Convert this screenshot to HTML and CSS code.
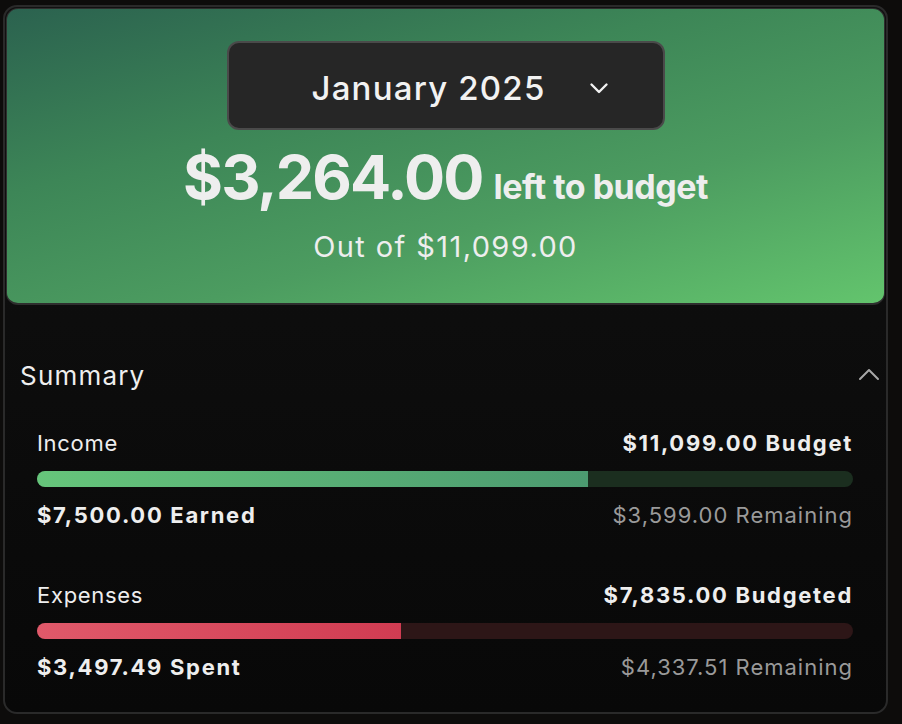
FILE: index.html
```html
<!DOCTYPE html>
<html lang="en">
<head>
    <meta charset="UTF-8">
    <meta name="viewport" content="width=device-width, initial-scale=1.0">
    <title>Budget</title>
    <link rel="stylesheet" href="styles.css">
</head>
<body>
    <div class="card">
        <!-- header with month picker -->
        <div class="hero">
            <button class="month-picker">
                <span>January 2025</span>
                <svg width="24" height="24" viewBox="0 0 24 24" fill="none" stroke="#f2f2f2" stroke-width="2.4" stroke-linecap="round" stroke-linejoin="round"><path d="M4.5 8.5l7.5 7.5 7.5-7.5"/></svg>
            </button>
            <div class="left-amount">
                <span class="big">$3,264.00</span>
                <span class="small">left to budget</span>
            </div>
            <div class="out-of">Out of $11,099.00</div>
        </div>

        <!-- summary -->
        <div class="summary">
            <div class="summary-head">
                <span>Summary</span>
                <svg width="24" height="24" viewBox="0 0 24 24" fill="none" stroke="#a8a8a8" stroke-width="2" stroke-linecap="round" stroke-linejoin="round"><path d="M3 16l9-9 9 9"/></svg>
            </div>

            <div class="group">
                <div class="row">
                    <span class="label">Income</span>
                    <span class="strong">$11,099.00 Budget</span>
                </div>
                <div class="bar income">
                    <div class="fill" style="width: 67.58%;"></div>
                </div>
                <div class="row">
                    <span class="strong">$7,500.00 Earned</span>
                    <span class="muted">$3,599.00 Remaining</span>
                </div>
            </div>

            <div class="group">
                <div class="row">
                    <span class="label">Expenses</span>
                    <span class="strong">$7,835.00 Budgeted</span>
                </div>
                <div class="bar expense">
                    <div class="fill" style="width: 44.64%;"></div>
                </div>
                <div class="row">
                    <span class="strong">$3,497.49 Spent</span>
                    <span class="muted">$4,337.51 Remaining</span>
                </div>
            </div>
        </div>
    </div>
</body>
</html>
```

FILE: styles.css
```css
body {
    margin: 0;
    background-color: #0d0c0b;
    font-family: Inter, "Noto Sans", sans-serif;
    color: #eeeeee;
}

.card {
    margin: 5px 0 0 3px;
    width: 881px;
    height: 705px;
    border: 2px solid #2a2a2a;
    border-radius: 14px;
    background: linear-gradient(180deg, #111111 0%, #080808 100%);
    overflow: hidden;
}

.hero {
    margin: 1px;
    height: 294px;
    border: 1px solid #2e2e2e;
    border-bottom-width: 2px;
    border-radius: 12px;
    background: linear-gradient(165deg, #2b624f 0%, #3d8657 35%, #4c9c60 65%, #63c46d 100%);
    display: flex;
    flex-direction: column;
    align-items: center;
}

.month-picker {
    margin-top: 32px;
    width: 438px;
    height: 89px;
    padding: 4px 52px 0 83px;
    display: flex;
    align-items: center;
    justify-content: space-between;
    background-color: #262626;
    border: 2px solid #4a4a4a;
    border-radius: 12px;
    color: #f2f2f2;
    font-family: Inter, sans-serif;
    font-size: 33px;
    font-weight: 500;
    letter-spacing: 1.2px;
}

.left-amount {
    margin-top: 12px;
    display: flex;
    align-items: baseline;
    gap: 11px;
    line-height: 70px;
}

.left-amount .big {
    font-size: 61px;
    font-weight: 700;
    letter-spacing: -1.9px;
}

.left-amount .small {
    font-size: 34px;
    font-weight: 700;
    letter-spacing: -0.5px;
}

.out-of {
    margin-top: 8px;
    font-size: 29px;
    line-height: 34px;
    letter-spacing: 1.4px;
}

.summary {
    padding: 0 33px 0 32px;
}

.summary-head {
    margin: 55px -28px 0 -17px;
    height: 30px;
    display: flex;
    align-items: center;
    justify-content: space-between;
    font-size: 26px;
    letter-spacing: 1.2px;
}

.group {
    margin-top: 40px;
}

.group + .group {
    margin-top: 54px;
}

.row {
    display: flex;
    justify-content: space-between;
    align-items: center;
    height: 26px;
    font-size: 22px;
    letter-spacing: 0.7px;
}

.strong {
    font-weight: 700;
    letter-spacing: 1.7px;
}

.muted {
    color: #9a9a9a;
    letter-spacing: 1px;
}

.bar {
    margin: 15px 0;
    height: 16px;
    border-radius: 8px;
    overflow: hidden;
}

.bar .fill {
    height: 100%;
}

.bar.income {
    background-color: #1b2e1f;
}

.bar.income .fill {
    background: linear-gradient(90deg, #66c57b 0%, #4c9a70 100%);
}

.bar.expense {
    background-color: #2d1617;
}

.bar.expense .fill {
    background: linear-gradient(90deg, #e0596a 0%, #d13c52 100%);
}
```
